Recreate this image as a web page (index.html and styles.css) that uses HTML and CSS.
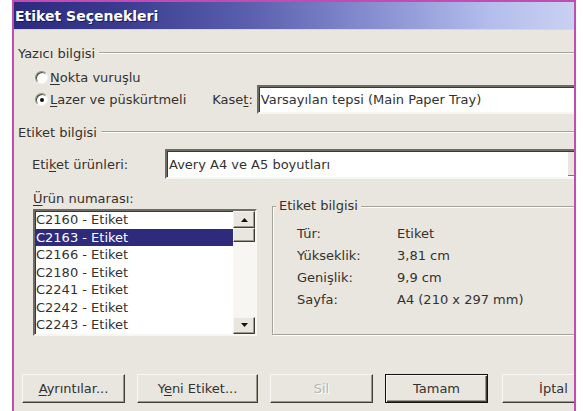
FILE: index.html
```html
<!DOCTYPE html>
<html lang="tr">
<head>
<meta charset="utf-8">
<title>Etiket Seçenekleri</title>
<link rel="stylesheet" href="styles.css">
</head>
<body>
<div class="page">
  <div class="dialog">
    <div class="titlebar"><span class="title">Etiket Seçenekleri</span></div>
    <div class="content">
      <div class="section-head sec-printer"><span>Yazıcı bilgisi</span><i class="groove"></i></div>

      <div class="radio-row row-dot">
        <span class="radio"></span><span class="radio-text"><u>N</u>okta vuruşlu</span>
      </div>
      <div class="radio-row row-laser">
        <span class="radio checked"></span><span class="radio-text"><u>L</u>azer ve püskürtmeli</span>
        <span class="field-label tray-label">Kase<u>t</u>:</span>
        <div class="combo tray-combo">
          <span class="combo-text">Varsayılan tepsi (Main Paper Tray)</span>
          <span class="combo-btn"><svg width="9" height="5" viewBox="0 0 9 5"><path d="M0 0h9L4.5 5z" fill="#111"/></svg></span>
        </div>
      </div>

      <div class="section-head sec-label"><span>Etiket bilgisi</span><i class="groove"></i></div>

      <div class="product-row">
        <span class="field-label product-label">Eti<u>k</u>et ürünleri:</span>
        <div class="combo product-combo">
          <span class="combo-text">Avery A4 ve A5 boyutları</span>
          <span class="combo-btn"><svg width="9" height="5" viewBox="0 0 9 5"><path d="M0 0h9L4.5 5z" fill="#111"/></svg></span>
        </div>
      </div>

      <div class="lower">
        <div class="list-col">
          <div class="list-caption"><u>Ü</u>rün numarası:</div>
          <div class="listbox">
            <ul class="items">
              <li>C2160 - Etiket</li>
              <li class="selected">C2163 - Etiket</li>
              <li>C2166 - Etiket</li>
              <li>C2180 - Etiket</li>
              <li>C2241 - Etiket</li>
              <li>C2242 - Etiket</li>
              <li>C2243 - Etiket</li>
            </ul>
            <div class="scrollbar">
              <span class="sb-btn"><svg width="7" height="4" viewBox="0 0 7 4"><path d="M3.5 0L7 4H0z" fill="#111"/></svg></span>
              <span class="sb-thumb"></span>
              <span class="sb-track"></span>
              <span class="sb-btn"><svg width="7" height="4" viewBox="0 0 7 4"><path d="M0 0h7L3.5 4z" fill="#111"/></svg></span>
            </div>
          </div>
        </div>

        <div class="info">
          <span class="info-title">Etiket bilgisi</span>
          <dl class="info-grid">
            <dt>Tür:</dt><dd>Etiket</dd>
            <dt>Yükseklik:</dt><dd>3,81 cm</dd>
            <dt>Genişlik:</dt><dd>9,9 cm</dd>
            <dt>Sayfa:</dt><dd>A4 (210 x 297 mm)</dd>
          </dl>
        </div>
      </div>

      <div class="buttons">
        <button class="btn btn-details" type="button"><u>A</u>yrıntılar...</button>
        <button class="btn btn-new" type="button">Y<u>e</u>ni Etiket...</button>
        <button class="btn btn-delete" type="button" disabled>Sil</button>
        <button class="btn btn-ok" type="button">Tamam</button>
        <button class="btn btn-cancel" type="button">İptal</button>
      </div>
    </div>
  </div>
</div>
</body>
</html>
```

FILE: styles.css
```css
* {
  box-sizing: border-box;
}

html,
body {
  margin: 0;
  padding: 0;
  background: #ffffff;
}

body {
  font-family: "DejaVu Sans", Tahoma, sans-serif;
  font-size: 13px;
  color: #33322f;
}

u {
  text-underline-offset: 2px;
}

.page {
  width: 583px;
  height: 411px;
  overflow: hidden;
  padding-left: 12px;
}

/* dialog window, cropped on the right edge */
.dialog {
  width: 564px;
  height: 411px;
  border: 2px solid #c24db2;
  border-bottom: 0;
  background: #e9e6e0;
  overflow: hidden;
  display: flex;
  flex-direction: column;
}

.titlebar {
  flex: none;
  height: 28px;
  display: flex;
  align-items: center;
  padding-left: 1px;
  background: linear-gradient(to right, #2c2a7e 0%, #393a8e 18%, #5b5fae 42%, #8f97d6 68%, #b4bdec 85%, #c9d1f1 100%);
  border-bottom: 1px solid #d6d4e2;
}

.title {
  font-weight: bold;
  font-size: 14px;
  color: #ffffff;
  text-shadow: 1px 1px 0 #1c1a52;
}

.content {
  flex: 1;
  width: 600px;
  display: flex;
  flex-direction: column;
}

/* group headings with an etched rule */
.section-head {
  display: flex;
  align-items: center;
  height: 16px;
  padding-left: 4px;
}

.section-head .groove {
  flex: 1;
  margin-left: 4px;
  border-top: 1px solid #a6a39c;
  border-bottom: 1px solid #ffffff;
}

.sec-printer {
  margin-top: 15px;
}

.sec-label {
  margin-top: 10px;
}

.radio-row {
  display: flex;
  align-items: center;
  padding-left: 21px;
}

.row-dot {
  margin-top: 8px;
  height: 16px;
}

.row-laser {
  height: 29px;
}

.radio {
  width: 13px;
  height: 13px;
  border-radius: 50%;
  background: #ffffff;
  border: 1px solid;
  border-color: #8d8a83 #f4f3ef #f4f3ef #8d8a83;
  box-shadow: inset 1px 1px 0 #47453f;
  display: flex;
  align-items: center;
  justify-content: center;
  flex: none;
}

.radio.checked::after {
  content: "";
  width: 4px;
  height: 4px;
  border-radius: 50%;
  background: #111111;
}

.radio-text {
  margin-left: 2px;
}

.field-label {
  flex: none;
}

.tray-label {
  margin-left: 26px;
  margin-right: 4px;
}

/* sunken drop-down field */
.combo {
  display: flex;
  align-items: center;
  height: 29px;
  background: #ffffff;
  border: 2px solid;
  border-color: #6f6c66 #f7f6f3 #f7f6f3 #6f6c66;
  box-shadow: inset 1px 1px 0 #3a3835;
  padding-left: 2px;
}

.combo-text {
  flex: 1;
}

.combo-btn {
  width: 21px;
  align-self: stretch;
  margin: 1px 0;
  background: #e9e6e0;
  border-left: 1px solid #ffffff;
  box-shadow: inset -1px -1px 0 #7a7770;
  display: flex;
  align-items: center;
  justify-content: center;
}

.tray-combo {
  width: 340px;
  flex: none;
}

.product-row {
  display: flex;
  align-items: center;
  margin-top: 9px;
  padding-left: 18px;
}

.product-label {
  width: 133px;
}

.product-combo {
  width: 425px;
  height: 30px;
}

.lower {
  display: flex;
  align-items: flex-start;
  padding-left: 19px;
}

.list-col {
  width: 224px;
  flex: none;
}

.list-caption {
  margin-top: 12px;
  height: 16px;
  line-height: 16px;
}

.listbox {
  margin-top: 2px;
  display: flex;
  background: #ffffff;
  border: 2px solid;
  border-color: #6f6c66 #f7f6f3 #f7f6f3 #6f6c66;
  box-shadow: inset 1px 1px 0 #3a3835;
}

.items {
  list-style: none;
  margin: 0;
  padding: 0;
  flex: 1;
}

.items li {
  height: 17.5px;
  line-height: 17.5px;
  padding-left: 1px;
  white-space: nowrap;
}

.items li.selected {
  background: #2e2a7c;
  color: #ffffff;
}

.scrollbar {
  width: 22px;
  display: flex;
  flex-direction: column;
  background: #f7f6f2;
}

.sb-btn,
.sb-thumb {
  display: flex;
  align-items: center;
  justify-content: center;
  background: #e9e6e0;
  border: 1px solid;
  border-color: #f4f3ef #3f3d39 #3f3d39 #f4f3ef;
  box-shadow: inset -1px -1px 0 #9c9890;
}

.sb-btn {
  height: 17px;
}

.sb-thumb {
  height: 14px;
}

.sb-track {
  flex: 1;
}

/* "Etiket bilgisi" frame on the right */
.info {
  margin-top: 27px;
  margin-left: 15px;
  width: 340px;
  height: 129px;
  border: 1px solid #a6a39c;
  box-shadow: inset 1px 1px 0 #ffffff, 1px 1px 0 #ffffff;
}

.info-title {
  display: table;
  margin: -9px 0 0 3px;
  padding: 0 3px;
  line-height: 16px;
  background: #e9e6e0;
}

.info-grid {
  display: grid;
  grid-template-columns: 100px auto;
  grid-auto-rows: 22px;
  align-items: center;
  margin: 8px 0 0 24px;
}

.info-grid dt,
.info-grid dd {
  margin: 0;
}

.buttons {
  display: flex;
  gap: 12px;
  margin-top: 38px;
  padding-left: 8px;
}

.btn {
  font: inherit;
  color: #33322f;
  width: 103px;
  height: 29px;
  padding: 0;
  background: #e9e6e0;
  border: 1px solid;
  border-color: #f7f6f3 #3f3d39 #3f3d39 #f7f6f3;
  box-shadow: inset -1px -1px 0 #9c9890;
  flex: none;
}

.btn-new {
  width: 121px;
}

.btn-delete {
  color: #b8b5ae;
  text-shadow: 1px 1px 0 #ffffff;
}

.btn-ok {
  border-color: #111111;
  box-shadow: inset 1px 1px 0 #f7f6f3, inset -1px -1px 0 #3f3d39, inset -2px -2px 0 #9c9890;
}

.btn-cancel {
  margin-left: 2px;
}
```
